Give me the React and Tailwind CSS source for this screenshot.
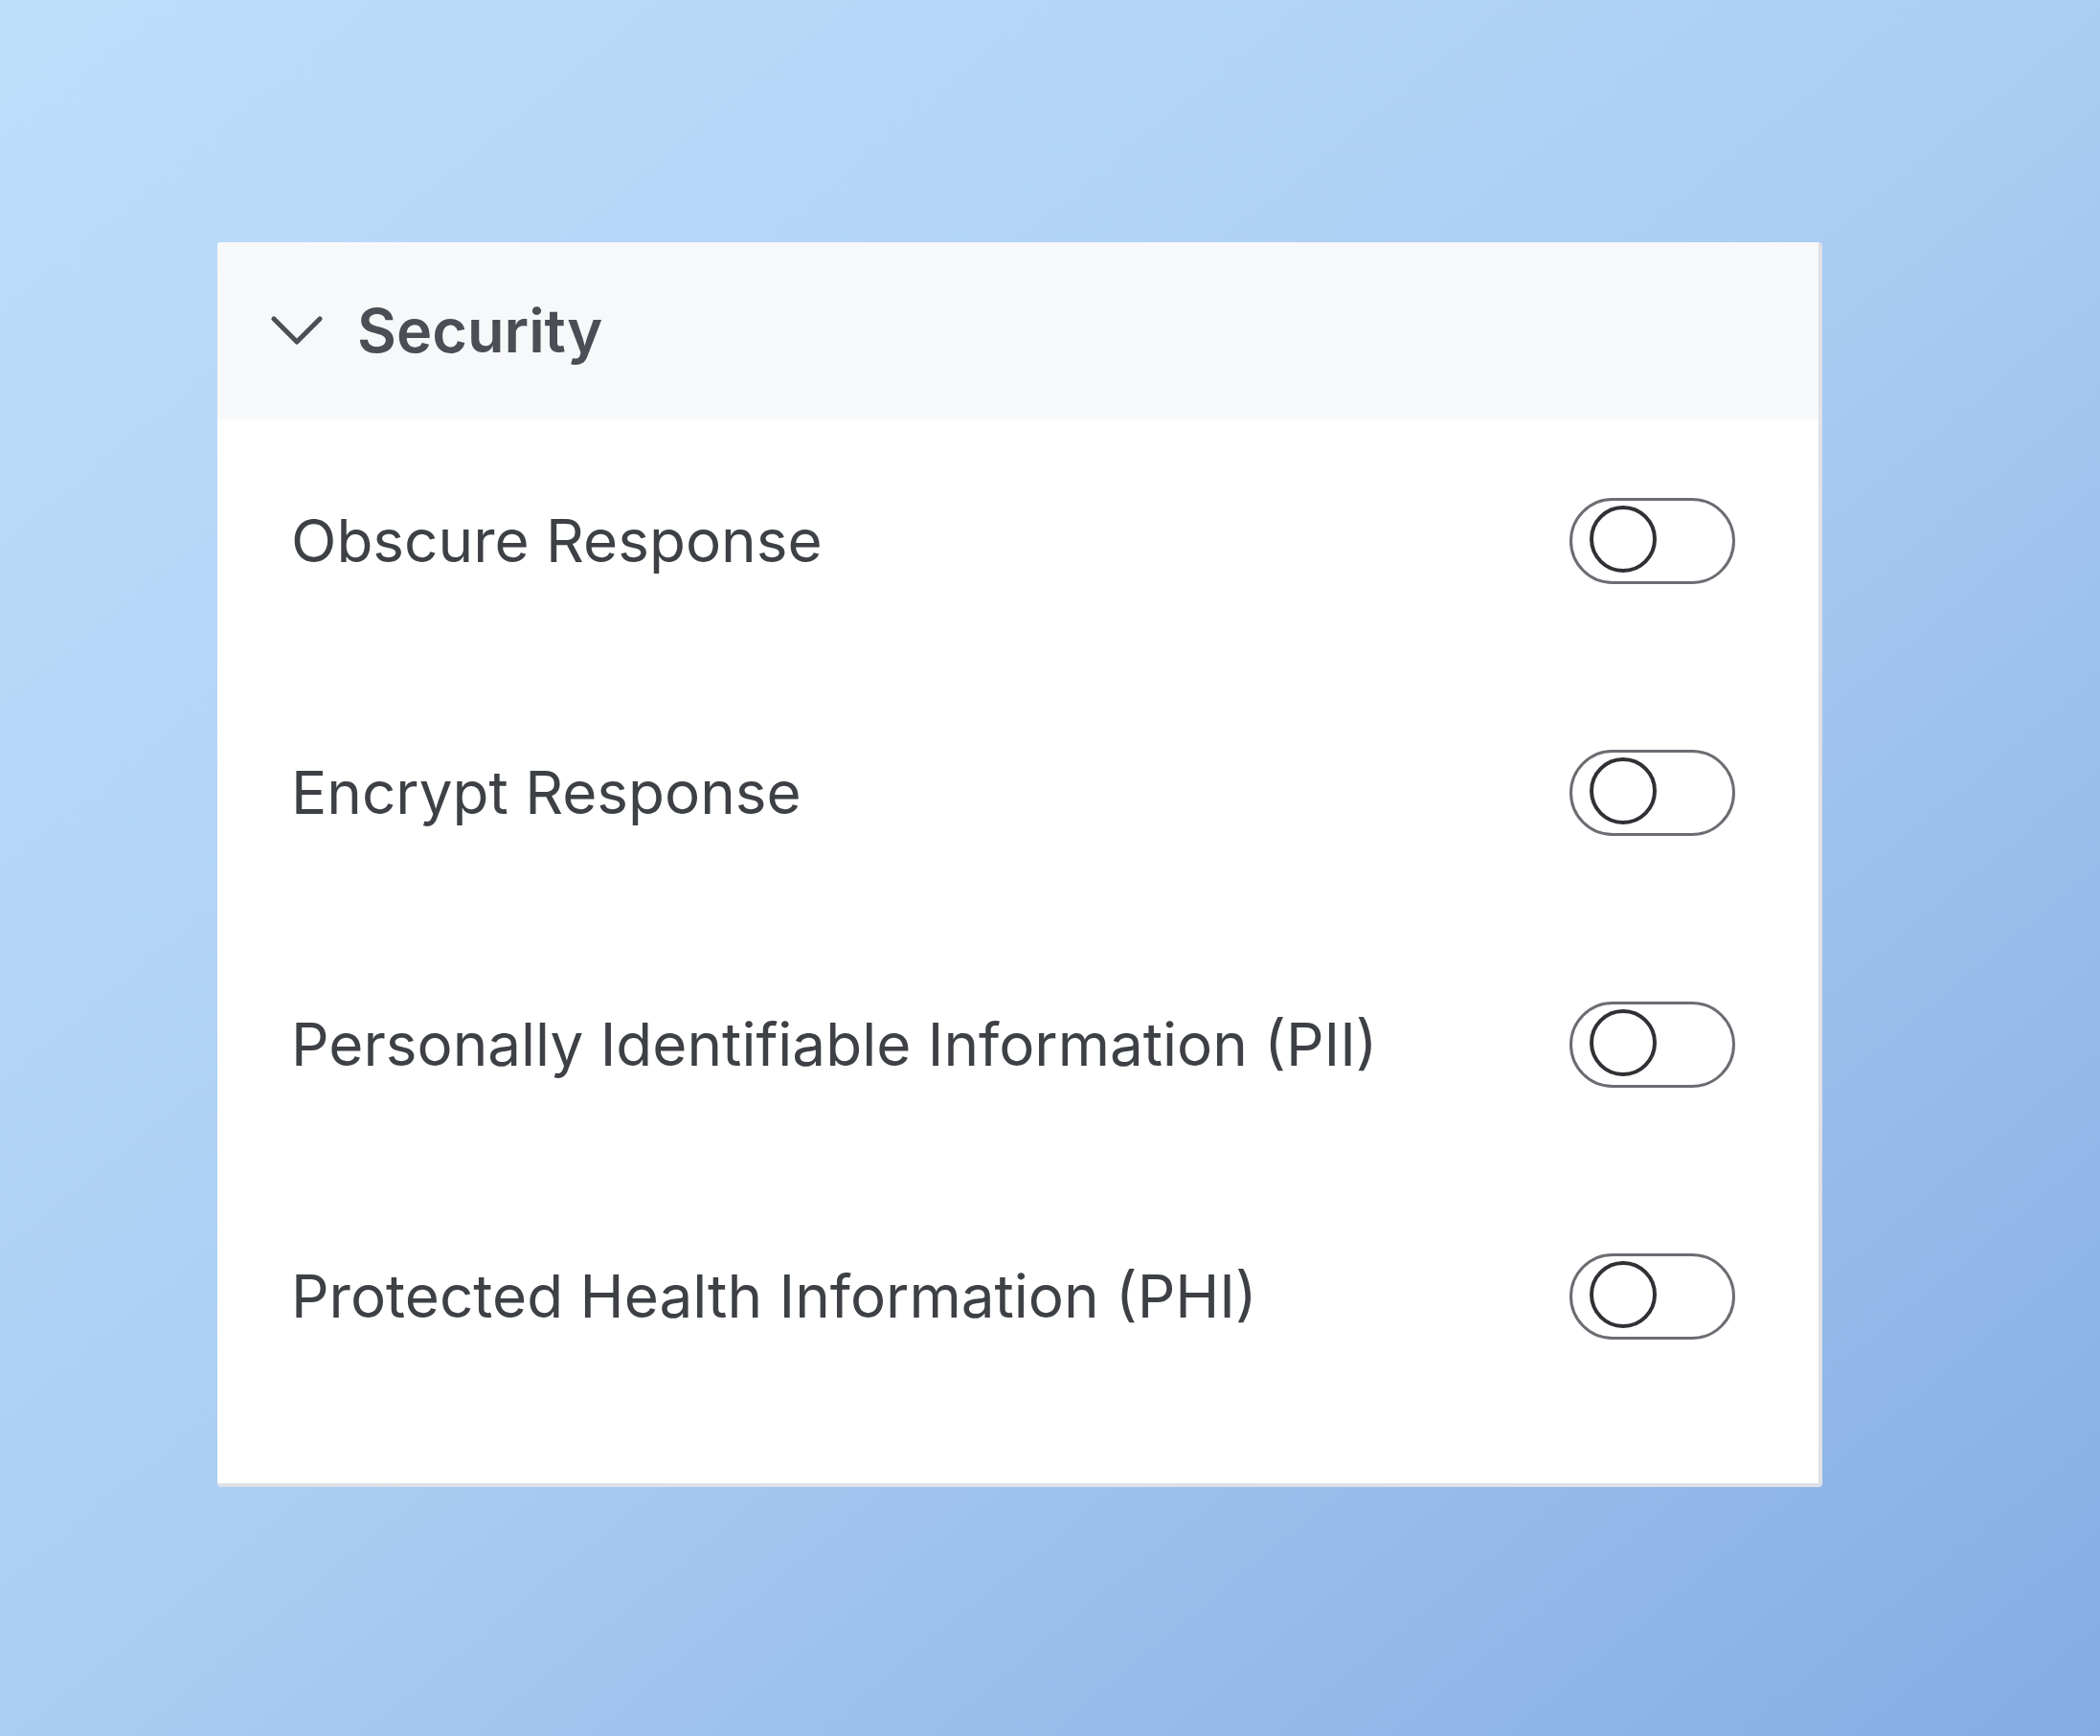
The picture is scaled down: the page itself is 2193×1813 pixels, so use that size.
import React from 'react'

const settings = [
  'Obscure Response',
  'Encrypt Response',
  'Personally Identifiable Information (PII)',
  'Protected Health Information (PHI)',
]

function Toggle() {
  return (
    <div className="relative h-[90px] w-[173px] shrink-0 rounded-full border-[3px] border-[#6b6d72] bg-white">
      <div className="absolute left-[18px] top-[5px] h-[70px] w-[70px] rounded-full border-[4px] border-[#2f3135] bg-white" />
    </div>
  )
}

export default function App() {
  return (
    <div
      className="min-h-[1813px] w-[2193px] bg-linear-to-br from-[#bedffa] via-[#abcdf3] to-[#84ade3] pl-[227px] pt-[253px]"
      style={{ fontFamily: 'Inter, "Noto Sans", sans-serif' }}
    >
      <div className="w-[1676px] overflow-hidden rounded-[4px] border-r-[4px] border-b-[4px] border-[#dfe1e7] bg-white">
        <div className="flex h-[185px] items-center bg-[#f7f8fa] pl-[56px]">
          <svg width="54" height="34" viewBox="0 0 54 34" fill="none" className="shrink-0">
            <polyline points="3,4 27,28 51,4" stroke="#4a4e55" strokeWidth="5" strokeLinecap="round" strokeLinejoin="round" />
          </svg>
          <span className="ml-[36px] text-[63px] font-semibold leading-none text-[#4a4e55]">Security</span>
        </div>
        <div className="flex flex-col gap-[173px] pt-[82px] pb-[150px] pl-[77px] pr-[87px]">
          {settings.map((label) => (
            <div key={label} className="flex h-[90px] items-center justify-between">
              <span className="text-[62px] leading-none text-[#3d4045]">{label}</span>
              <Toggle />
            </div>
          ))}
        </div>
      </div>
    </div>
  )
}
